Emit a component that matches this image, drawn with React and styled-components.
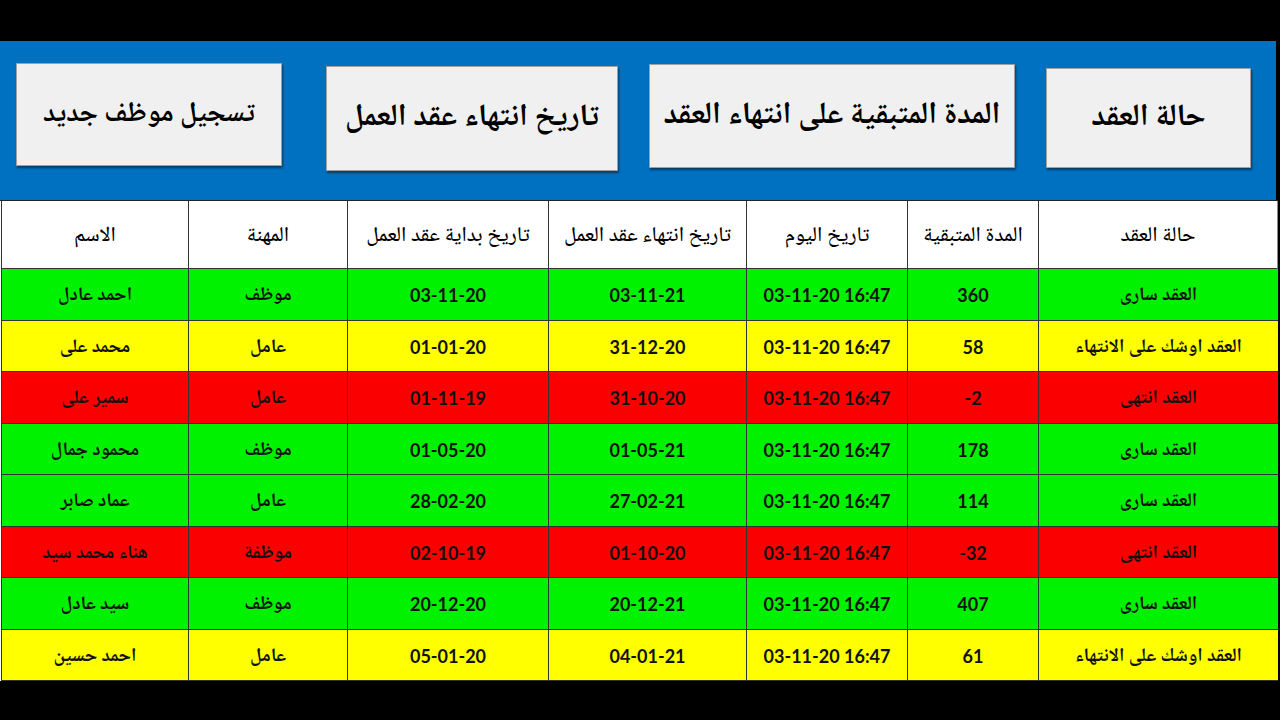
import styled, { createGlobalStyle } from "styled-components";

const GlobalStyle = createGlobalStyle`
  html, body {
    margin: 0;
    padding: 0;
    background: #000;
  }
`;

const arabic = `"Noto Naskh Arabic", "Noto Sans Arabic", "DejaVu Sans", sans-serif`;
const numeric = `"Lato", "Liberation Sans", sans-serif`;

const colors = {
  green: "#00f200",
  yellow: "#ffff00",
  red: "#fa0000",
};

const columns = [
  { title: "حالة العقد", width: 240 },
  { title: "المدة المتبقية", width: 131 },
  { title: "تاريخ اليوم", width: 161 },
  { title: "تاريخ انتهاء عقد العمل", width: 198 },
  { title: "تاريخ بداية عقد العمل", width: 201 },
  { title: "المهنة", width: 159 },
  { title: "الاسم", width: 187 },
];

const rows = [
  ["العقد سارى", "360", "03-11-20 16:47", "03-11-21", "03-11-20", "موظف", "احمد عادل", "green"],
  ["العقد اوشك على الانتهاء", "58", "03-11-20 16:47", "31-12-20", "01-01-20", "عامل", "محمد على", "yellow"],
  ["العقد انتهى", "-2", "03-11-20 16:47", "31-10-20", "01-11-19", "عامل", "سمير على", "red"],
  ["العقد سارى", "178", "03-11-20 16:47", "01-05-21", "01-05-20", "موظف", "محمود جمال", "green"],
  ["العقد سارى", "114", "03-11-20 16:47", "27-02-21", "28-02-20", "عامل", "عماد صابر", "green"],
  ["العقد انتهى", "-32", "03-11-20 16:47", "01-10-20", "02-10-19", "موظفة", "هناء محمد سيد", "red"],
  ["العقد سارى", "407", "03-11-20 16:47", "20-12-21", "20-12-20", "موظف", "سيد عادل", "green"],
  ["العقد اوشك على الانتهاء", "61", "03-11-20 16:47", "04-01-21", "05-01-20", "عامل", "احمد حسين", "yellow"],
];

const buttons = [
  { label: "حالة العقد", width: 205, top: 27, height: 100, size: 31 },
  { label: "المدة المتبقية على انتهاء العقد", width: 366, top: 23, height: 104, size: 31 },
  { label: "تاريخ انتهاء عقد العمل", width: 292, top: 25, height: 105, size: 31 },
  { label: "تسجيل موظف جديد", width: 266, top: 22, height: 103, size: 28 },
];

export default function App() {
  const gridTemplate = columns.map((c) => `${c.width}px`).join(" ");

  return (
    <Page>
      <GlobalStyle />
      <Toolbar dir="rtl">
        {buttons.map((b) => (
          <ActionButton
            key={b.label}
            $width={b.width}
            $top={b.top}
            $height={b.height}
            $size={b.size}
          >
            {b.label}
          </ActionButton>
        ))}
      </Toolbar>

      <Table dir="rtl" $template={gridTemplate}>
        {columns.map((c) => (
          <HeadCell key={c.title}>{c.title}</HeadCell>
        ))}

        {rows.map((row, i) =>
          row.slice(0, 7).map((value, j) => (
            <Cell
              key={`${i}-${j}`}
              $bg={colors[row[7]]}
              $numeric={j >= 1 && j <= 4}
              dir={j >= 1 && j <= 4 ? "ltr" : "rtl"}
            >
              {value}
            </Cell>
          ))
        )}
      </Table>
    </Page>
  );
}

const Page = styled.div`
  width: 1280px;
  height: 720px;
  padding-top: 41px;
  box-sizing: border-box;
  background: #000;
  overflow: hidden;
`;

const Toolbar = styled.div`
  width: 1276px;
  height: 159px;
  background: #0070c0;
  display: flex;
  align-items: flex-start;
  gap: 31px;
  padding-right: 25px;
  box-sizing: border-box;

  & > :last-child {
    margin-right: 13px;
  }
`;

const ActionButton = styled.div`
  width: ${(p) => p.$width}px;
  height: ${(p) => p.$height}px;
  margin-top: ${(p) => p.$top}px;
  flex-shrink: 0;
  background: #f0f0f0;
  border: 1px solid #a0a0a0;
  box-shadow: 1px 2px 2px rgba(0, 0, 0, 0.45);
  box-sizing: border-box;
  display: flex;
  align-items: center;
  justify-content: center;
  white-space: nowrap;
  font-family: ${arabic};
  font-weight: 800;
  font-size: ${(p) => p.$size}px;
  color: #000;
`;

const Table = styled.div`
  display: grid;
  grid-template-columns: ${(p) => p.$template};
  grid-template-rows: 68px repeat(8, 51.5px);
  width: 1278px;
  border-top: 1px solid #222;
  background: #fff;
`;

const HeadCell = styled.div`
  background: #fff;
  border-left: 1px solid #333;
  border-bottom: 1px solid #333;
  display: flex;
  align-items: center;
  justify-content: center;
  font-family: ${arabic};
  font-size: 21px;
  font-weight: 500;
  color: #000;
  padding-top: 3px;
  box-sizing: border-box;

  &:first-child {
    border-right: 1px solid #888;
  }
`;

const Cell = styled.div`
  background: ${(p) => p.$bg};
  border-left: 1px solid #333;
  border-bottom: 1px solid #333;
  display: flex;
  align-items: center;
  justify-content: center;
  font-family: ${(p) => (p.$numeric ? numeric : arabic)};
  font-weight: ${(p) => (p.$numeric ? 700 : 800)};
  font-size: ${(p) => (p.$numeric ? "18px" : "19px")};
  padding-top: ${(p) => (p.$numeric ? "2px" : "4px")};
  color: #111;
  box-sizing: border-box;
`;
